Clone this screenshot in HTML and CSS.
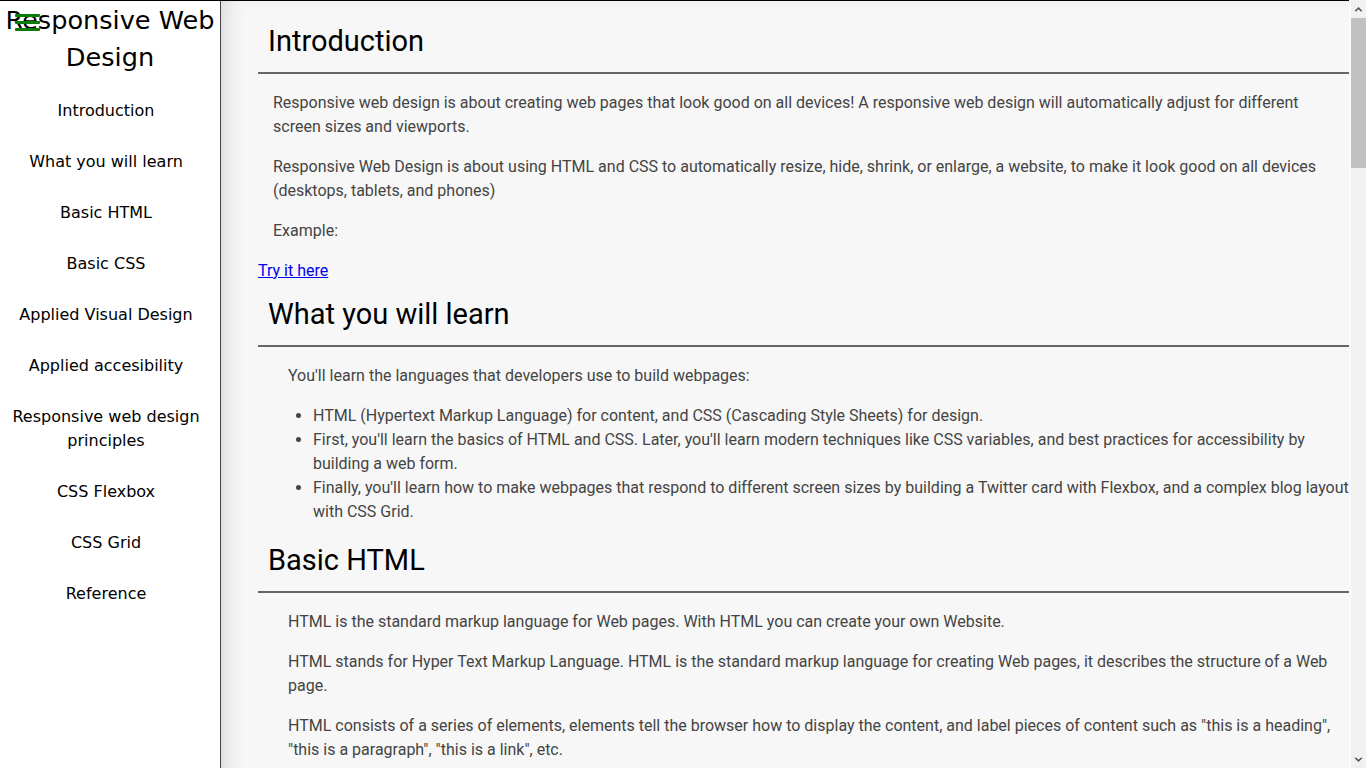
FILE: index.html
```html
<!DOCTYPE html>
<html lang="en">
<head>
<meta charset="utf-8">
<title>Responsive Web Design</title>
<link rel="stylesheet" href="styles.css">
</head>
<body>
<nav class="sidebar" id="navbar">
  <span class="burger" aria-hidden="true"><i></i><i></i><i></i></span>
  <header class="brand">Responsive Web Design</header>
  <ul class="nav-list">
    <li><a class="nav-link" href="#Introduction">Introduction</a></li>
    <li><a class="nav-link" href="#What_you_will_learn">What you will learn</a></li>
    <li><a class="nav-link" href="#Basic_HTML">Basic HTML</a></li>
    <li><a class="nav-link" href="#Basic_CSS">Basic CSS</a></li>
    <li><a class="nav-link" href="#Applied_Visual_Design">Applied Visual Design</a></li>
    <li><a class="nav-link" href="#Applied_accesibility">Applied accesibility</a></li>
    <li><a class="nav-link" href="#Responsive_web_design_principles">Responsive web design principles</a></li>
    <li><a class="nav-link" href="#CSS_Flexbox">CSS Flexbox</a></li>
    <li><a class="nav-link" href="#CSS_Grid">CSS Grid</a></li>
    <li><a class="nav-link" href="#Reference">Reference</a></li>
  </ul>
</nav>
<main class="main" id="main-doc">
  <section class="section first" id="Introduction">
    <header class="sec-title">Introduction</header>
    <div class="intro">
      <p>Responsive web design is about creating web pages that look good on all devices! A responsive web design will automatically adjust for different screen sizes and viewports.</p>
      <p>Responsive Web Design is about using HTML and CSS to automatically resize, hide, shrink, or enlarge, a website, to make it look good on all devices (desktops, tablets, and phones)</p>
      <p>Example:</p>
    </div>
  </section>
  <a class="try" href="#Introduction">Try it here</a>
  <section class="section" id="What_you_will_learn">
    <header class="sec-title">What you will learn</header>
    <div class="body">
      <p>You'll learn the languages that developers use to build webpages:</p>
      <ul class="bullets">
        <li>HTML (Hypertext Markup Language) for content, and CSS (Cascading Style Sheets) for design.</li>
        <li>First, you'll learn the basics of HTML and CSS. Later, you'll learn modern techniques like CSS variables, and best practices for accessibility by building a web form.</li>
        <li>Finally, you'll learn how to make webpages that respond to different screen sizes by building a Twitter card with Flexbox, and a complex blog layout with CSS Grid.</li>
      </ul>
    </div>
  </section>
  <section class="section" id="Basic_HTML">
    <header class="sec-title">Basic HTML</header>
    <div class="body">
      <p>HTML is the standard markup language for Web pages. With HTML you can create your own Website.</p>
      <p>HTML stands for Hyper Text Markup Language. HTML is the standard markup language for creating Web pages, it describes the structure of a Web page.</p>
      <p>HTML consists of a series of elements, elements tell the browser how to display the content, and label pieces of content such as "this is a heading", "this is a paragraph", "this is a link", etc.</p>
      <p>A simple HTML document starts with a doctype declaration, followed by the html, head and body elements.</p>
    </div>
  </section>
  <section class="section" id="Basic_CSS">
    <header class="sec-title">Basic CSS</header>
    <div class="body">
      <p>CSS is the language we use to style an HTML document. CSS describes how HTML elements should be displayed.</p>
      <p>CSS stands for Cascading Style Sheets. CSS saves a lot of work, it can control the layout of multiple web pages all at once.</p>
      <p>External stylesheets are stored in CSS files.</p>
    </div>
  </section>
  <section class="section" id="Applied_Visual_Design">
    <header class="sec-title">Applied Visual Design</header>
    <div class="body">
      <p>Visual design is a combination of typography, color theory, graphics, animation, page layout, and more to help deliver a unique message.</p>
      <p>In this section, you'll learn how to apply these different elements of visual design to your webpages.</p>
    </div>
  </section>
  <section class="section" id="Applied_accesibility">
    <header class="sec-title">Applied accesibility</header>
    <div class="body">
      <p>In web development, accessibility refers to web content and a UI (user interface) that can be understood, navigated, and interacted with by a broad audience. This includes people with visual, auditory, mobility, or cognitive disabilities.</p>
      <p>In this section, you'll learn best practices for building webpages that are accessible to everyone.</p>
    </div>
  </section>
  <section class="section" id="Responsive_web_design_principles">
    <header class="sec-title">Responsive web design principles</header>
    <div class="body">
      <p>There are many devices that can access the web, and they come in all shapes and sizes. Responsive web design is the practice of designing flexible websites that can respond to different screen sizes, orientations, and resolutions.</p>
      <p>In this section, you'll learn how to use CSS to make your webpages look good, no matter what device they're viewed on.</p>
    </div>
  </section>
  <section class="section" id="CSS_Flexbox">
    <header class="sec-title">CSS Flexbox</header>
    <div class="body">
      <p>Flexbox is a powerful, well-supported layout method that was introduced with the latest version of CSS, CSS3. With flexbox, it's easy to center elements on the page and create dynamic user interfaces that shrink and expand automatically.</p>
      <p>In this section, you'll learn the fundamentals of flexbox and dynamic layouts by building a Twitter card.</p>
    </div>
  </section>
  <section class="section" id="CSS_Grid">
    <header class="sec-title">CSS Grid</header>
    <div class="body">
      <p>CSS Grid helps you easily build complex web designs. It works by turning an HTML element into a grid container with rows and columns for you to place children elements where you want within the grid.</p>
      <p>In this section, you'll learn all about CSS Grid by building different complex web designs.</p>
    </div>
  </section>
  <section class="section" id="Reference">
    <header class="sec-title">Reference</header>
    <div class="body">
      <p>All the documentation in this page is taken from w3schools and freeCodeCamp.</p>
    </div>
  </section>
</main>
<div class="scrollbar" aria-hidden="true">
  <span class="sb-btn">
    <svg width="9" height="6" viewBox="0 0 9 6"><path d="M0.5 5 L4.5 1 L8.5 5 L7 5.6 L4.5 3.2 L2 5.6 Z" fill="#505050"/></svg>
  </span>
  <span class="sb-track"><span class="sb-thumb"></span></span>
  <span class="sb-btn">
    <svg width="9" height="6" viewBox="0 0 9 6"><path d="M0.5 1 L4.5 5 L8.5 1 L7 0.4 L4.5 2.8 L2 0.4 Z" fill="#505050"/></svg>
  </span>
</div>
</body>
</html>
```
FILE: styles.css
```css
html {
  background: #f7f7f7;
}
body {
  margin: 0;
  border-top: 1px solid #000;
  display: flex;
  align-items: flex-start;
  background: #f7f7f7;
  font-family: Roboto, "Liberation Sans", sans-serif;
}
.sidebar {
  position: sticky;
  top: 0;
  flex: 0 0 220px;
  width: 220px;
  height: calc(100vh - 1px);
  background: #fff;
  border-right: 1px solid #444;
  font-family: "DejaVu Sans", "Liberation Sans", sans-serif;
  color: #000;
}
.burger {
  position: absolute;
  left: 15px;
  top: 13px;
  width: 25px;
  display: flex;
  flex-direction: column;
  gap: 4px;
}
.burger i {
  display: block;
  height: 3px;
  background: #0a7a0a;
  border-radius: 1px;
}
.brand {
  display: block;
  text-align: center;
  font-size: 25.6px;
  line-height: 37px;
  padding-top: 1px;
  margin: 0 -10px;
}
.nav-list {
  list-style: none;
  margin: 9px 0 0;
  padding: 0 8px 0 0;
}
.nav-link {
  display: block;
  padding: 13.5px 6px;
  text-align: center;
  font-size: 16px;
  line-height: 24px;
  color: #000;
  text-decoration: none;
}
.main {
  flex: 1;
  min-width: 0;
  padding: 23px 17px 700px 37px;
  background: #f7f7f7;
  box-shadow: inset 14px 0 22px -12px rgba(0, 0, 0, 0.16);
}
.sec-title {
  display: block;
  font-size: 29px;
  line-height: 34px;
  color: #000;
  padding: 0 0 14px 10px;
  border-bottom: 2px solid #666;
}
p {
  margin: 16px 0;
}
.intro > p:first-child,
.body > p:first-child {
  margin-top: 17px;
}
.intro,
.body {
  font-size: 16px;
  line-height: 24px;
  color: #444;
}
.intro {
  padding: 0 15px;
}
.body {
  padding: 0 0 0 30px;
}
.try {
  display: block;
  font-size: 16px;
  line-height: 24px;
  color: #00e;
  text-decoration: underline;
  width: max-content;
}
.bullets {
  margin: 16px 0 19px;
  padding-left: 25px;
}
.section {
  margin-top: 14px;
}
.section.first {
  margin-top: 0;
}
.scrollbar {
  position: fixed;
  top: 0;
  right: 0;
  width: 15px;
  height: 100vh;
  background: #f1f1f1;
  border-left: 2px solid #fafafa;
  display: flex;
  flex-direction: column;
}
.sb-btn {
  flex: 0 0 17px;
  display: flex;
  align-items: center;
  justify-content: center;
}
.sb-track {
  flex: 1;
  display: flex;
  flex-direction: column;
}
.sb-thumb {
  height: 150px;
  margin: 1px 0 0;
  background: #c1c1c1;
}
```
